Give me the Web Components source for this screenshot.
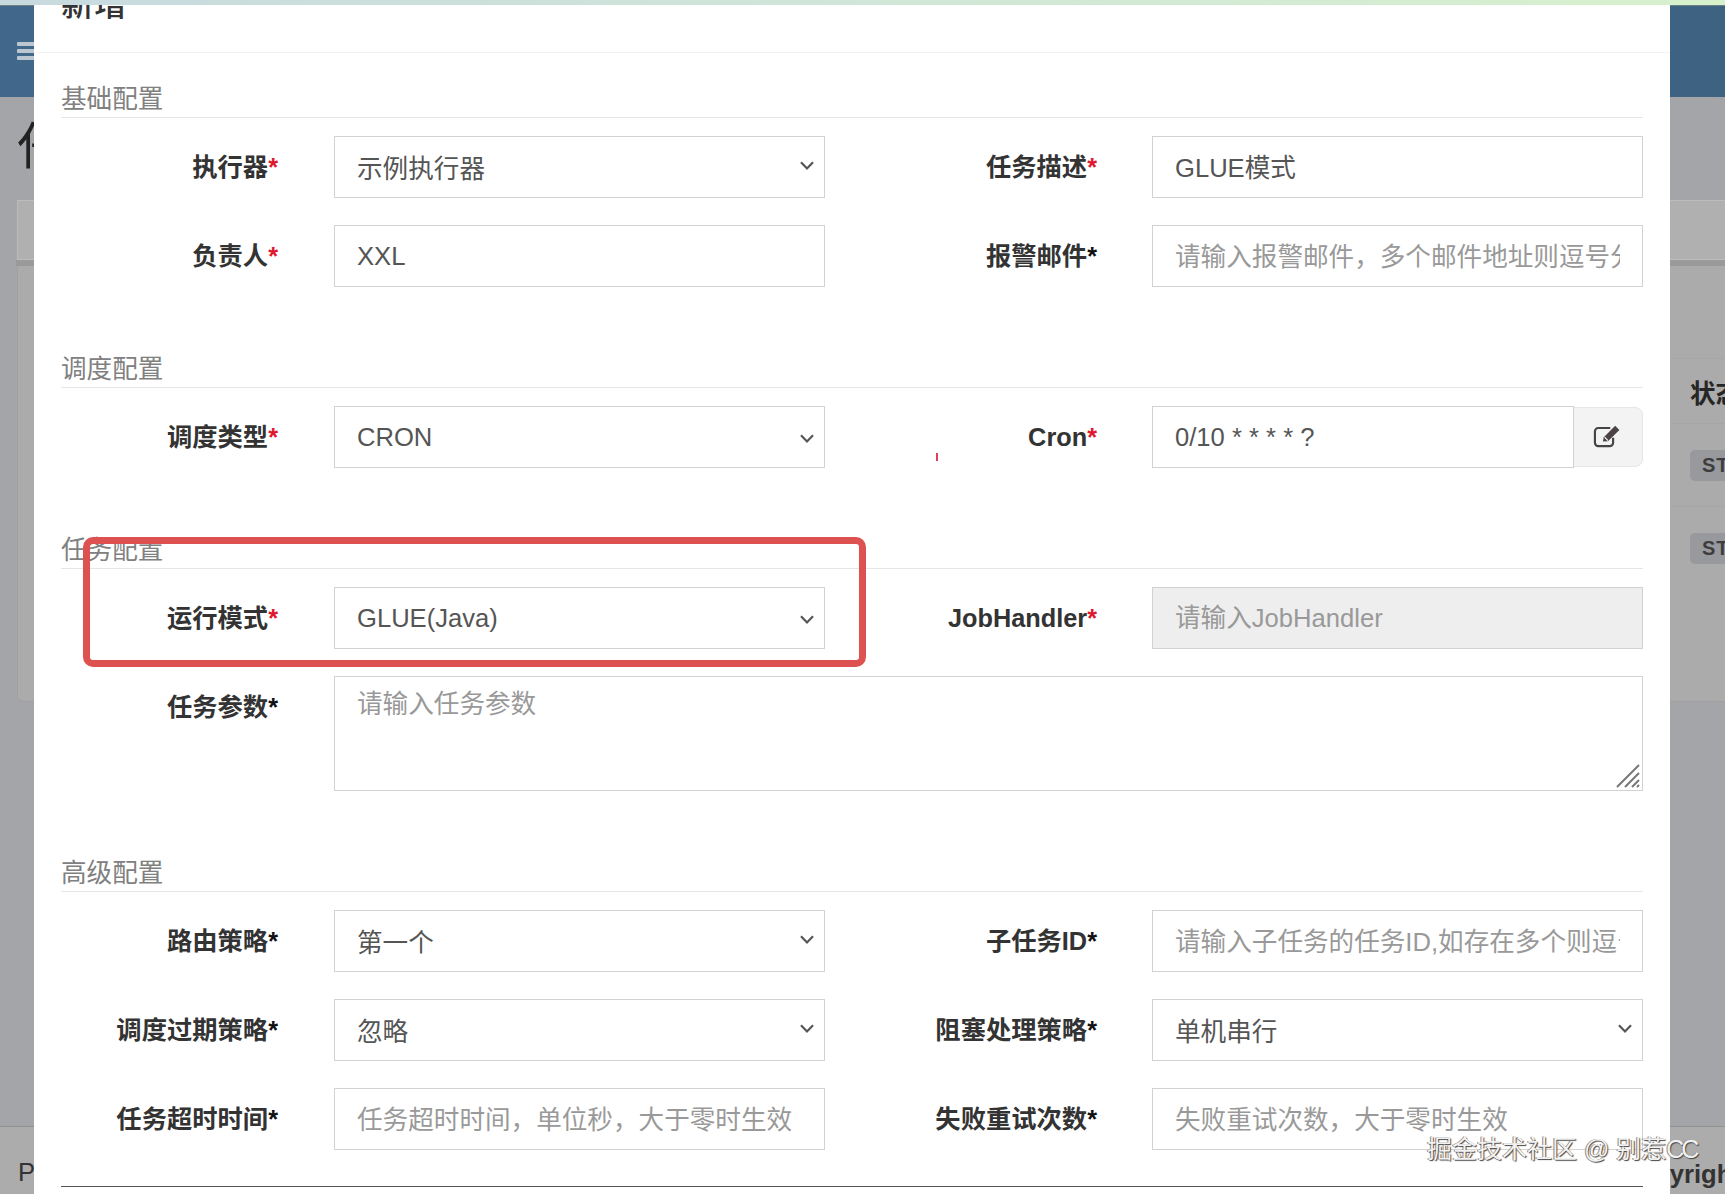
<!DOCTYPE html>
<html lang="zh-CN">
<head>
<meta charset="utf-8">
<title>新增任务</title>
<style>
  html, body { margin: 0; height: 100%; overflow: hidden; }
  body {
    font-family: "Liberation Sans", "Noto Sans CJK SC", sans-serif;
    font-size: 25.6px;
    color: #333;
    background: #a4a5a8;
  }
</style>
</head>
<body>
<admin-shell>
  <job-modal title-text="新增">
    <form-section title-text="基础配置">
      <form-field label="执行器" red><form-control kind="select" cjk>示例执行器</form-control></form-field>
      <form-field label="任务描述" red right><form-control cjk>GLUE模式</form-control></form-field>
      <form-field label="负责人" red><form-control>XXL</form-control></form-field>
      <form-field label="报警邮件" right><form-control empty cjk>请输入报警邮件，多个邮件地址则逗号分隔</form-control></form-field>
    </form-section>
    <form-section title-text="调度配置">
      <form-field label="调度类型" red><form-control kind="select">CRON</form-control></form-field>
      <form-field label="Cron" red right><form-control kind="addon">0/10 * * * * ?</form-control></form-field>
    </form-section>
    <form-section title-text="任务配置">
      <form-field label="运行模式" red><form-control kind="select">GLUE(Java)</form-control></form-field>
      <form-field label="JobHandler" red right><form-control kind="disabled" empty>请输入JobHandler</form-control></form-field>
      <form-field label="任务参数" wide><form-control kind="textarea" empty>请输入任务参数</form-control></form-field>
    </form-section>
    <form-section title-text="高级配置">
      <form-field label="路由策略"><form-control kind="select" cjk>第一个</form-control></form-field>
      <form-field label="子任务ID" right><form-control empty cjk>请输入子任务的任务ID,如存在多个则逗号分隔</form-control></form-field>
      <form-field label="调度过期策略"><form-control kind="select" cjk>忽略</form-control></form-field>
      <form-field label="阻塞处理策略" right><form-control kind="select" cjk>单机串行</form-control></form-field>
      <form-field label="任务超时时间"><form-control empty cjk>任务超时时间，单位秒，大于零时生效</form-control></form-field>
      <form-field label="失败重试次数" right><form-control empty cjk>失败重试次数，大于零时生效</form-control></form-field>
    </form-section>
  </job-modal>
  <red-frame></red-frame>
  <water-mark>掘金技术社区 @ 别惹<span style="letter-spacing:-3px">CC</span></water-mark>
</admin-shell>

<script>
class AdminShell extends HTMLElement {
  connectedCallback() {
    this.attachShadow({ mode: 'open' });
    this.shadowRoot.innerHTML = `
      <style>
        :host {
          display: flex;
          flex-direction: column;
          position: relative;
          width: 1725px;
          height: 1194px;
          overflow: hidden;
          background: #a4a5a8;
        }
        .strip {
          height: 5px;
          background: linear-gradient(90deg, #c8dadf, #d0e6d8 50%, #d7f1cd);
          border-bottom: 1px solid #6f8080;
        }
        .topbar {
          height: 91px;
          background: linear-gradient(90deg, #41688a, #3e6382);
          display: flex;
          flex-direction: column;
          justify-content: center;
          gap: 3px;
          padding: 0 0 2px 17px;
          box-sizing: border-box;
        }
        .topbar i { display: block; width: 22px; height: 4px; background: #bcc6d0; border-radius: 1px; }
        .content { flex: 1; padding: 0 0 0 17px; }
        h1 { margin: 0; height: 103px; font-size: 50px; line-height: 100px; font-weight: 400; color: #222; white-space: nowrap; }
        .filter { height: 60px; background: #b0b0b0; border: 1px solid #bcbcbc; border-right: 0; box-sizing: border-box; }
        .band { height: 6px; background: #9a9a9b; margin-left: -1px; }
        .box {
          height: 436px;
          box-sizing: border-box;
          background: #ababab;
          border-left: 1px solid #a0a0a0;
          border-bottom: 1px solid #a0a0a0;
          border-bottom-left-radius: 6px;
          padding-top: 92px;
        }
        .row { height: 83px; margin-left: 1600px; border-top: 1px solid #a6a6a6; box-sizing: border-box; padding-left: 72px; white-space: nowrap; display: flex; align-items: center; overflow: hidden; }
        .row.head { height: 65px; font-weight: 700; color: #262626; }
        .tag { background: #98999c; color: #3d3d3f; font-weight: 700; font-size: 20px; line-height: 31px; height: 31px; padding: 0 12px; border-radius: 5px; letter-spacing: 1px; }
        footer {
          height: 68px;
          background: #acacac;
          border-top: 1px solid #909090;
          box-sizing: border-box;
          display: flex;
          align-items: center;
          padding: 24px 0 0 18px;
          white-space: nowrap;
          color: #333;
        }
        .left { flex: none; width: 1602px; }
        .right { flex: none; font-weight: 700; padding-top: 4px; }
      </style>
      <div class="strip"></div>
      <div class="topbar"><i></i><i></i><i></i></div>
      <div class="content">
        <h1>任务管理</h1>
        <div class="filter"></div>
        <div class="band"></div>
        <div class="box">
          <div class="row head">状态</div>
          <div class="row"><span class="tag">STOP</span></div>
          <div class="row"><span class="tag">STOP</span></div>
        </div>
      </div>
      <footer><span class="left">Powered by xxl-job</span><span class="right">Copyright © 2015-2024 xuxueli</span></footer>
      <slot></slot>
    `;
  }
}

class JobModal extends HTMLElement {
  connectedCallback() {
    this.attachShadow({ mode: 'open' });
    this.shadowRoot.innerHTML = `
      <style>
        :host {
          display: block;
          position: absolute;
          z-index: 0;
          top: 5px;
          left: 34px;
          bottom: 0;
          width: 1636px;
          background: #fff;
          overflow: hidden;
        }
        header {
          height: 48px;
          box-sizing: border-box;
          border-bottom: 1px solid #f2f2f2;
          padding-left: 27px;
          overflow: hidden;
        }
        h4 { margin: -22px 0 0; font-size: 33px; line-height: 44px; font-weight: 500; color: #333; }
        .body { padding: 28px 27px 0; }
        .end { height: 1px; background: #555; margin-top: 36px; }
        .tick { position: absolute; left: 902px; top: 448px; width: 2px; height: 8px; background: #e0405a; }
      </style>
      <header><h4>${this.getAttribute('title-text')}</h4></header>
      <div class="body">
        <slot></slot>
        <div class="end"></div>
      </div>
      <span class="tick"></span>
    `;
  }
}

class FormSection extends HTMLElement {
  connectedCallback() {
    this.attachShadow({ mode: 'open' });
    this.shadowRoot.innerHTML = `
      <style>
        :host { display: block; margin-bottom: 64px; }
        :host(:last-of-type) { margin-bottom: 0; }
        h5 {
          margin: 0 0 18px;
          height: 37px;
          box-sizing: border-box;
          border-bottom: 1px solid #e5e5e5;
          font-size: 25.6px;
          line-height: 37px;
          font-weight: 400;
          color: #808080;
        }
        .grid { display: grid; grid-template-columns: 764px 818px; row-gap: 27px; }
      </style>
      <h5>${this.getAttribute('title-text')}</h5>
      <div class="grid"><slot></slot></div>
    `;
  }
}

class FormField extends HTMLElement {
  connectedCallback() {
    const star = this.hasAttribute('red') ? 'red' : '';
    this.attachShadow({ mode: 'open' });
    this.shadowRoot.innerHTML = `
      <style>
        :host { display: flex; min-width: 0; }
        :host([wide]) { grid-column: 1 / -1; }
        label {
          flex: none;
          width: 273px;
          box-sizing: border-box;
          padding-right: 56px;
          height: 62px;
          font-size: 25.3px;
          line-height: 63px;
          text-align: right;
          font-weight: 700;
          color: #333;
          white-space: nowrap;
        }
        :host([right]) label { width: 327px; padding-right: 55px; }
        b { color: #111; }
        b.red { color: #e0182d; }
        .ctl { flex: 1; min-width: 0; }
      </style>
      <label>${this.getAttribute('label')}<b class="${star}">*</b></label>
      <div class="ctl"><slot></slot></div>
    `;
  }
}

const CHEVRON = `<svg class="chev" width="14" height="9" viewBox="0 0 14 9"><path d="M1 1.2 7 7.4 13 1.2" fill="none" stroke="#555" stroke-width="2.2"/></svg>`;
const PENCIL = `<svg width="30" height="25" viewBox="0 0 26 22">
  <path d="M15 3.5H4.5A3 3 0 0 0 1.5 6.5V16.5A3 3 0 0 0 4.5 19.5H14.5A3 3 0 0 0 17.5 16.5V12" fill="none" stroke="#444" stroke-width="1.9"/>
  <path d="M8.5 15.5 9.3 11.6 19.3 1.6 23 5.3 13 15.2Z" fill="#4a4244"/>
  <path d="M10 11.6 13 14.6" stroke="#fff" stroke-width="1"/>
</svg>`;
const GRIP = `<svg class="grip" width="24" height="24" viewBox="0 0 24 24"><path d="M1 23 23 1M9 23 23 9M16 23 23 16M21 23 23 21" stroke="#777" stroke-width="2"/></svg>`;

class FormControl extends HTMLElement {
  connectedCallback() {
    const kind = this.getAttribute('kind') || 'input';
    let extra = '';
    if (kind === 'select') extra = CHEVRON;
    if (kind === 'textarea') extra = GRIP;
    this.attachShadow({ mode: 'open' });
    this.shadowRoot.innerHTML = `
      <style>
        :host { display: flex; height: 62px; color: #555; }
        :host([empty]) { color: #999; }
        :host([kind="textarea"]) { height: 115px; }
        .box {
          flex: 1;
          min-width: 0;
          position: relative;
          z-index: 1;
          display: flex;
          align-items: center;
          box-sizing: border-box;
          border: 1px solid #d2d2d2;
          background: #fff;
          padding: 0 22px;
        }
        :host([kind="disabled"]) .box { background: #eee; }
        :host([kind="textarea"]) .box { align-items: flex-start; }
        :host([kind="select"]) .box { padding-right: 10px; }
        .text { flex: 1; min-width: 0; overflow: hidden; white-space: nowrap; line-height: 58px; }
        :host([kind="textarea"]) .text { line-height: 54px; }
        :host([cjk]) .text { padding-top: 2px; }
        :host([kind="select"][cjk]) .text { padding-top: 4px; }
        .chev { flex: none; margin: 2px 0 0 8px; }
        :host([kind="select"][cjk]) .chev { margin: 0 0 4px 8px; }
        .grip { position: absolute; right: 2px; bottom: 2px; }
        .btn {
          flex: none;
          width: 70px;
          height: 60px;
          margin: 1px 0 0 -1px;
          box-sizing: border-box;
          display: flex;
          align-items: center;
          justify-content: center;
          background: #f3f3f3;
          border: 1px solid #e6e6e6;
          border-radius: 0 8px 8px 0;
          padding-bottom: 2px;
        }
      </style>
      <div class="box"><div class="text"><slot></slot></div>${extra}</div>
      ${kind === 'addon' ? `<div class="btn">${PENCIL}</div>` : ''}
    `;
  }
}

class RedFrame extends HTMLElement {
  connectedCallback() {
    this.attachShadow({ mode: 'open' });
    this.shadowRoot.innerHTML = `
      <style>
        :host {
          display: block;
          position: absolute;
          z-index: 1;
          left: 83px;
          top: 537px;
          width: 783px;
          height: 130px;
          box-sizing: border-box;
          border: 7px solid #dd5250;
          border-radius: 10px;
          pointer-events: none;
        }
      </style>
    `;
  }
}

class WaterMark extends HTMLElement {
  connectedCallback() {
    this.attachShadow({ mode: 'open' });
    this.shadowRoot.innerHTML = `
      <style>
        :host {
          display: block;
          position: absolute;
          z-index: 1;
          left: 1427px;
          top: 1131px;
          font-size: 25px;
          line-height: 36px;
          white-space: nowrap;
          color: #f2f2f2;
          text-shadow: 1px 1px 1px #444, -1px 0 0 #888;
        }
      </style>
      <slot></slot>
    `;
  }
}

customElements.define('admin-shell', AdminShell);
customElements.define('job-modal', JobModal);
customElements.define('form-section', FormSection);
customElements.define('form-field', FormField);
customElements.define('form-control', FormControl);
customElements.define('red-frame', RedFrame);
customElements.define('water-mark', WaterMark);
</script>
</body>
</html>
